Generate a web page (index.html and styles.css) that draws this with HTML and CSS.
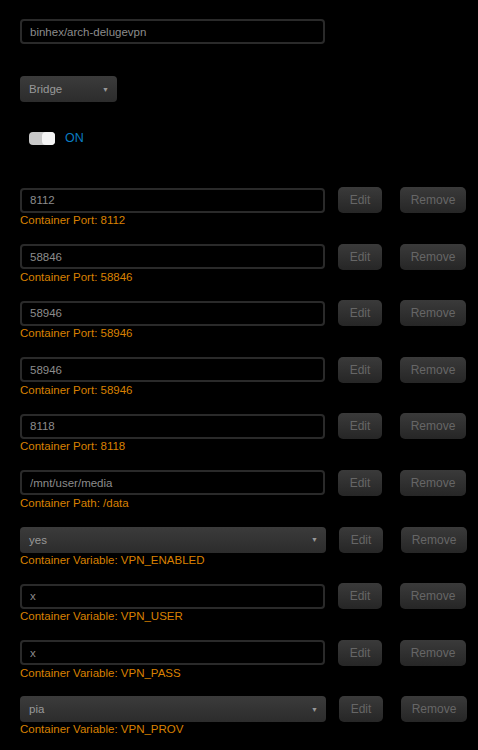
FILE: index.html
```html
<!DOCTYPE html>
<html lang="en">
<head>
<meta charset="UTF-8">
<meta name="viewport" content="width=device-width, initial-scale=1.0">
<title>Docker Container</title>
<link rel="stylesheet" href="styles.css">
</head>
<body>

<div class="container">
  <div class="field">
    <input type="text" class="text-input repo" value="binhex/arch-delugevpn">
  </div>

  <div class="field network">
    <div class="select small">Bridge<span class="caret">&#9660;</span></div>
  </div>

  <div class="field switch-row">
    <span class="switch"><span class="knob"></span></span>
    <span class="switch-label">ON</span>
  </div>

  <div class="mappings">
    <div class="mapping">
      <div class="line">
        <input type="text" class="text-input" value="8112">
        <button class="btn edit">Edit</button>
        <button class="btn remove">Remove</button>
      </div>
      <div class="hint">Container Port: 8112</div>
    </div>
    <div class="mapping">
      <div class="line">
        <input type="text" class="text-input" value="58846">
        <button class="btn edit">Edit</button>
        <button class="btn remove">Remove</button>
      </div>
      <div class="hint">Container Port: 58846</div>
    </div>
    <div class="mapping">
      <div class="line">
        <input type="text" class="text-input" value="58946">
        <button class="btn edit">Edit</button>
        <button class="btn remove">Remove</button>
      </div>
      <div class="hint">Container Port: 58946</div>
    </div>
    <div class="mapping">
      <div class="line">
        <input type="text" class="text-input" value="58946">
        <button class="btn edit">Edit</button>
        <button class="btn remove">Remove</button>
      </div>
      <div class="hint">Container Port: 58946</div>
    </div>
    <div class="mapping">
      <div class="line">
        <input type="text" class="text-input" value="8118">
        <button class="btn edit">Edit</button>
        <button class="btn remove">Remove</button>
      </div>
      <div class="hint">Container Port: 8118</div>
    </div>
    <div class="mapping">
      <div class="line">
        <input type="text" class="text-input" value="/mnt/user/media">
        <button class="btn edit">Edit</button>
        <button class="btn remove">Remove</button>
      </div>
      <div class="hint">Container Path: /data</div>
    </div>
    <div class="mapping">
      <div class="line">
        <div class="select wide">yes<span class="caret">&#9660;</span></div>
        <button class="btn edit">Edit</button>
        <button class="btn remove">Remove</button>
      </div>
      <div class="hint">Container Variable: VPN_ENABLED</div>
    </div>
    <div class="mapping">
      <div class="line">
        <input type="text" class="text-input" value="x">
        <button class="btn edit">Edit</button>
        <button class="btn remove">Remove</button>
      </div>
      <div class="hint">Container Variable: VPN_USER</div>
    </div>
    <div class="mapping">
      <div class="line">
        <input type="text" class="text-input" value="x">
        <button class="btn edit">Edit</button>
        <button class="btn remove">Remove</button>
      </div>
      <div class="hint">Container Variable: VPN_PASS</div>
    </div>
    <div class="mapping">
      <div class="line">
        <div class="select wide">pia<span class="caret">&#9660;</span></div>
        <button class="btn edit">Edit</button>
        <button class="btn remove">Remove</button>
      </div>
      <div class="hint">Container Variable: VPN_PROV</div>
    </div>
  </div>
</div>

</body>
</html>
```

FILE: styles.css
```css
/* General styles */
body {
  font-family: "Liberation Sans", Arial, sans-serif;
  font-size: 11.5px;
  background-color: #000;
  color: #999;
  margin: 0;
  padding: 0;
}

.container {
  padding: 19px 20px;
}

.field {
  display: flex;
  align-items: center;
}

.network {
  margin-top: 32px;
}

.switch-row {
  margin-top: 29px;
  padding-left: 9px;
  gap: 10px;
}

.mappings {
  margin-top: 42px;
}

/* Inputs */
.text-input {
  box-sizing: border-box;
  flex: 0 0 305px;
  width: 305px;
  height: 25px;
  margin: 0;
  padding: 0 8px;
  background-color: #000;
  border: 2px solid #2a2a2a;
  border-radius: 4px;
  color: #8c8c8c;
  font-family: inherit;
  font-size: 11.5px;
  outline: none;
}

.select {
  box-sizing: border-box;
  display: flex;
  flex-shrink: 0;
  align-items: center;
  justify-content: space-between;
  height: 26px;
  padding: 0 8px 0 9px;
  border-radius: 4px;
  background: linear-gradient(#3b3b3b, #2c2c2c);
  color: #999;
}

.select.small {
  width: 97px;
}

.select.wide {
  width: 306px;
}

.caret {
  font-size: 7px;
  color: #999;
}

/* Toggle switch */
.switch {
  position: relative;
  display: inline-block;
  width: 26px;
  height: 13px;
  border-radius: 4px;
  background-color: #c9c9c9;
}

.knob {
  position: absolute;
  right: 0;
  top: 0;
  width: 13px;
  height: 13px;
  border-radius: 4px;
  background-color: #f4f4f4;
}

.switch-label {
  color: #0a7cc0;
  font-size: 12.5px;
}

/* Mapping rows */
.mapping {
  margin-bottom: 16.6px;
}

.line {
  display: flex;
  align-items: center;
}

.btn {
  box-sizing: border-box;
  flex-shrink: 0;
  height: 26px;
  margin: 0;
  padding: 0;
  border: none;
  border-radius: 5px;
  background: linear-gradient(#3a3a3a, #262626);
  color: #666;
  font-family: inherit;
  font-size: 12px;
}

.edit {
  width: 44px;
  margin-left: 13px;
}

.remove {
  width: 66px;
  margin-left: 18px;
}

.hint {
  color: #d98000;
  line-height: 14px;
}
```
